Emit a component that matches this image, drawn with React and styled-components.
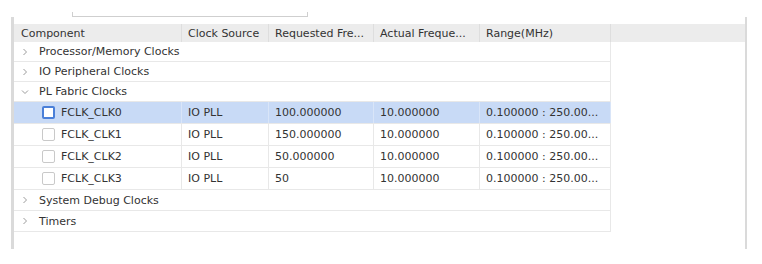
import React from 'react'
import styled, { createGlobalStyle, css } from 'styled-components'

const GlobalStyle = createGlobalStyle`
  html, body {
    margin: 0;
    padding: 0;
    background: #ffffff;
  }
  body {
    font-family: "DejaVu Sans", "Liberation Sans", sans-serif;
    font-size: 11px;
    color: #333333;
  }
`

const COLS = '168px 87px 105px 106px 131px'

const Page = styled.div`
  width: 762px;
  height: 264px;
  overflow: hidden;
`

const SearchBar = styled.div`
  height: 17px;
  display: flex;
  align-items: flex-end;
  padding-left: 72px;
`

const SearchBox = styled.div`
  width: 234px;
  height: 4px;
  border: 1px solid #cfcfcf;
  border-top: none;
`

const Panel = styled.div`
  margin-left: 11px;
  width: 736px;
  height: 232px;
  border-left: 3px solid #dadada;
  border-right: 2px solid #dadada;
  padding-top: 7px;
  box-sizing: border-box;
`

const Header = styled.div`
  display: grid;
  grid-template-columns: ${COLS} 1fr;
  height: 18px;
  background: #ececec;
`

const HeadCell = styled.div`
  display: flex;
  align-items: center;
  padding-left: ${p => (p.$first ? 7 : 6)}px;
  border-right: ${p => (p.$last ? 'none' : '1px solid #dedede')};
  white-space: nowrap;
  overflow: hidden;
`

const Body = styled.div`
  width: 597px;
`

const GroupRow = styled.div`
  display: flex;
  align-items: center;
  height: ${p => (p.$tall ? 21 : 20)}px;
  box-sizing: border-box;
  border-bottom: 1px solid #e8e8e8;
  border-right: 1px solid #e8e8e8;
  padding-left: 5px;
`

const Chevron = styled.span`
  width: 12px;
  display: flex;
  justify-content: center;
  margin-right: 8px;
`

const ItemRow = styled.div`
  display: grid;
  grid-template-columns: ${COLS};
  height: 22px;
  box-sizing: border-box;
  border-bottom: 1px solid #e8e8e8;
  background: ${p => (p.$selected ? '#c8daf6' : '#ffffff')};
`

const Cell = styled.div`
  display: flex;
  align-items: center;
  padding-left: 6px;
  border-right: 1px solid ${p => (p.$selected ? '#d9e5f8' : '#e8e8e8')};
  white-space: nowrap;
  overflow: hidden;
  ${p => p.$name && css`
    padding-left: 28px;
    gap: 6px;
  `}
`

const Check = styled.span`
  width: 13px;
  height: 13px;
  box-sizing: border-box;
  border-radius: 2px;
  background: #ffffff;
  border: ${p => (p.$active ? '2px solid #4a7fd8' : '1px solid #c9c9c9')};
`

const Arrow = ({ open }) => (
  <svg width="8" height="8" viewBox="0 0 8 8">
    {open ? (
      <path d="M1 2.5 L4 5.5 L7 2.5" fill="none" stroke="#9c9c9c" strokeWidth="1" />
    ) : (
      <path d="M2.5 1 L5.5 4 L2.5 7" fill="none" stroke="#9c9c9c" strokeWidth="1" />
    )}
  </svg>
)

const clocks = [
  { name: 'FCLK_CLK0', src: 'IO PLL', req: '100.000000', act: '10.000000', range: '0.100000 : 250.00...', selected: true },
  { name: 'FCLK_CLK1', src: 'IO PLL', req: '150.000000', act: '10.000000', range: '0.100000 : 250.00...' },
  { name: 'FCLK_CLK2', src: 'IO PLL', req: '50.000000', act: '10.000000', range: '0.100000 : 250.00...' },
  { name: 'FCLK_CLK3', src: 'IO PLL', req: '50', act: '10.000000', range: '0.100000 : 250.00...' },
]

const Group = ({ label, open, tall }) => (
  <GroupRow $tall={tall}>
    <Chevron><Arrow open={open} /></Chevron>
    {label}
  </GroupRow>
)

export default function App() {
  return (
    <Page>
      <GlobalStyle />
      <SearchBar>
        <SearchBox />
      </SearchBar>
      <Panel>
        <Header>
          <HeadCell $first>Component</HeadCell>
          <HeadCell>Clock Source</HeadCell>
          <HeadCell>Requested Fre...</HeadCell>
          <HeadCell>Actual Freque...</HeadCell>
          <HeadCell>Range(MHz)</HeadCell>
          <HeadCell $last />
        </Header>
        <Body>
          <Group label="Processor/Memory Clocks" />
          <Group label="IO Peripheral Clocks" />
          <Group label="PL Fabric Clocks" open />
          {clocks.map(c => (
            <ItemRow key={c.name} $selected={c.selected}>
              <Cell $name $selected={c.selected}>
                <Check $active={c.selected} />
                {c.name}
              </Cell>
              <Cell $selected={c.selected}>{c.src}</Cell>
              <Cell $selected={c.selected}>{c.req}</Cell>
              <Cell $selected={c.selected}>{c.act}</Cell>
              <Cell $selected={c.selected}>{c.range}</Cell>
            </ItemRow>
          ))}
          <Group label="System Debug Clocks" tall />
          <Group label="Timers" tall />
        </Body>
      </Panel>
    </Page>
  )
}
